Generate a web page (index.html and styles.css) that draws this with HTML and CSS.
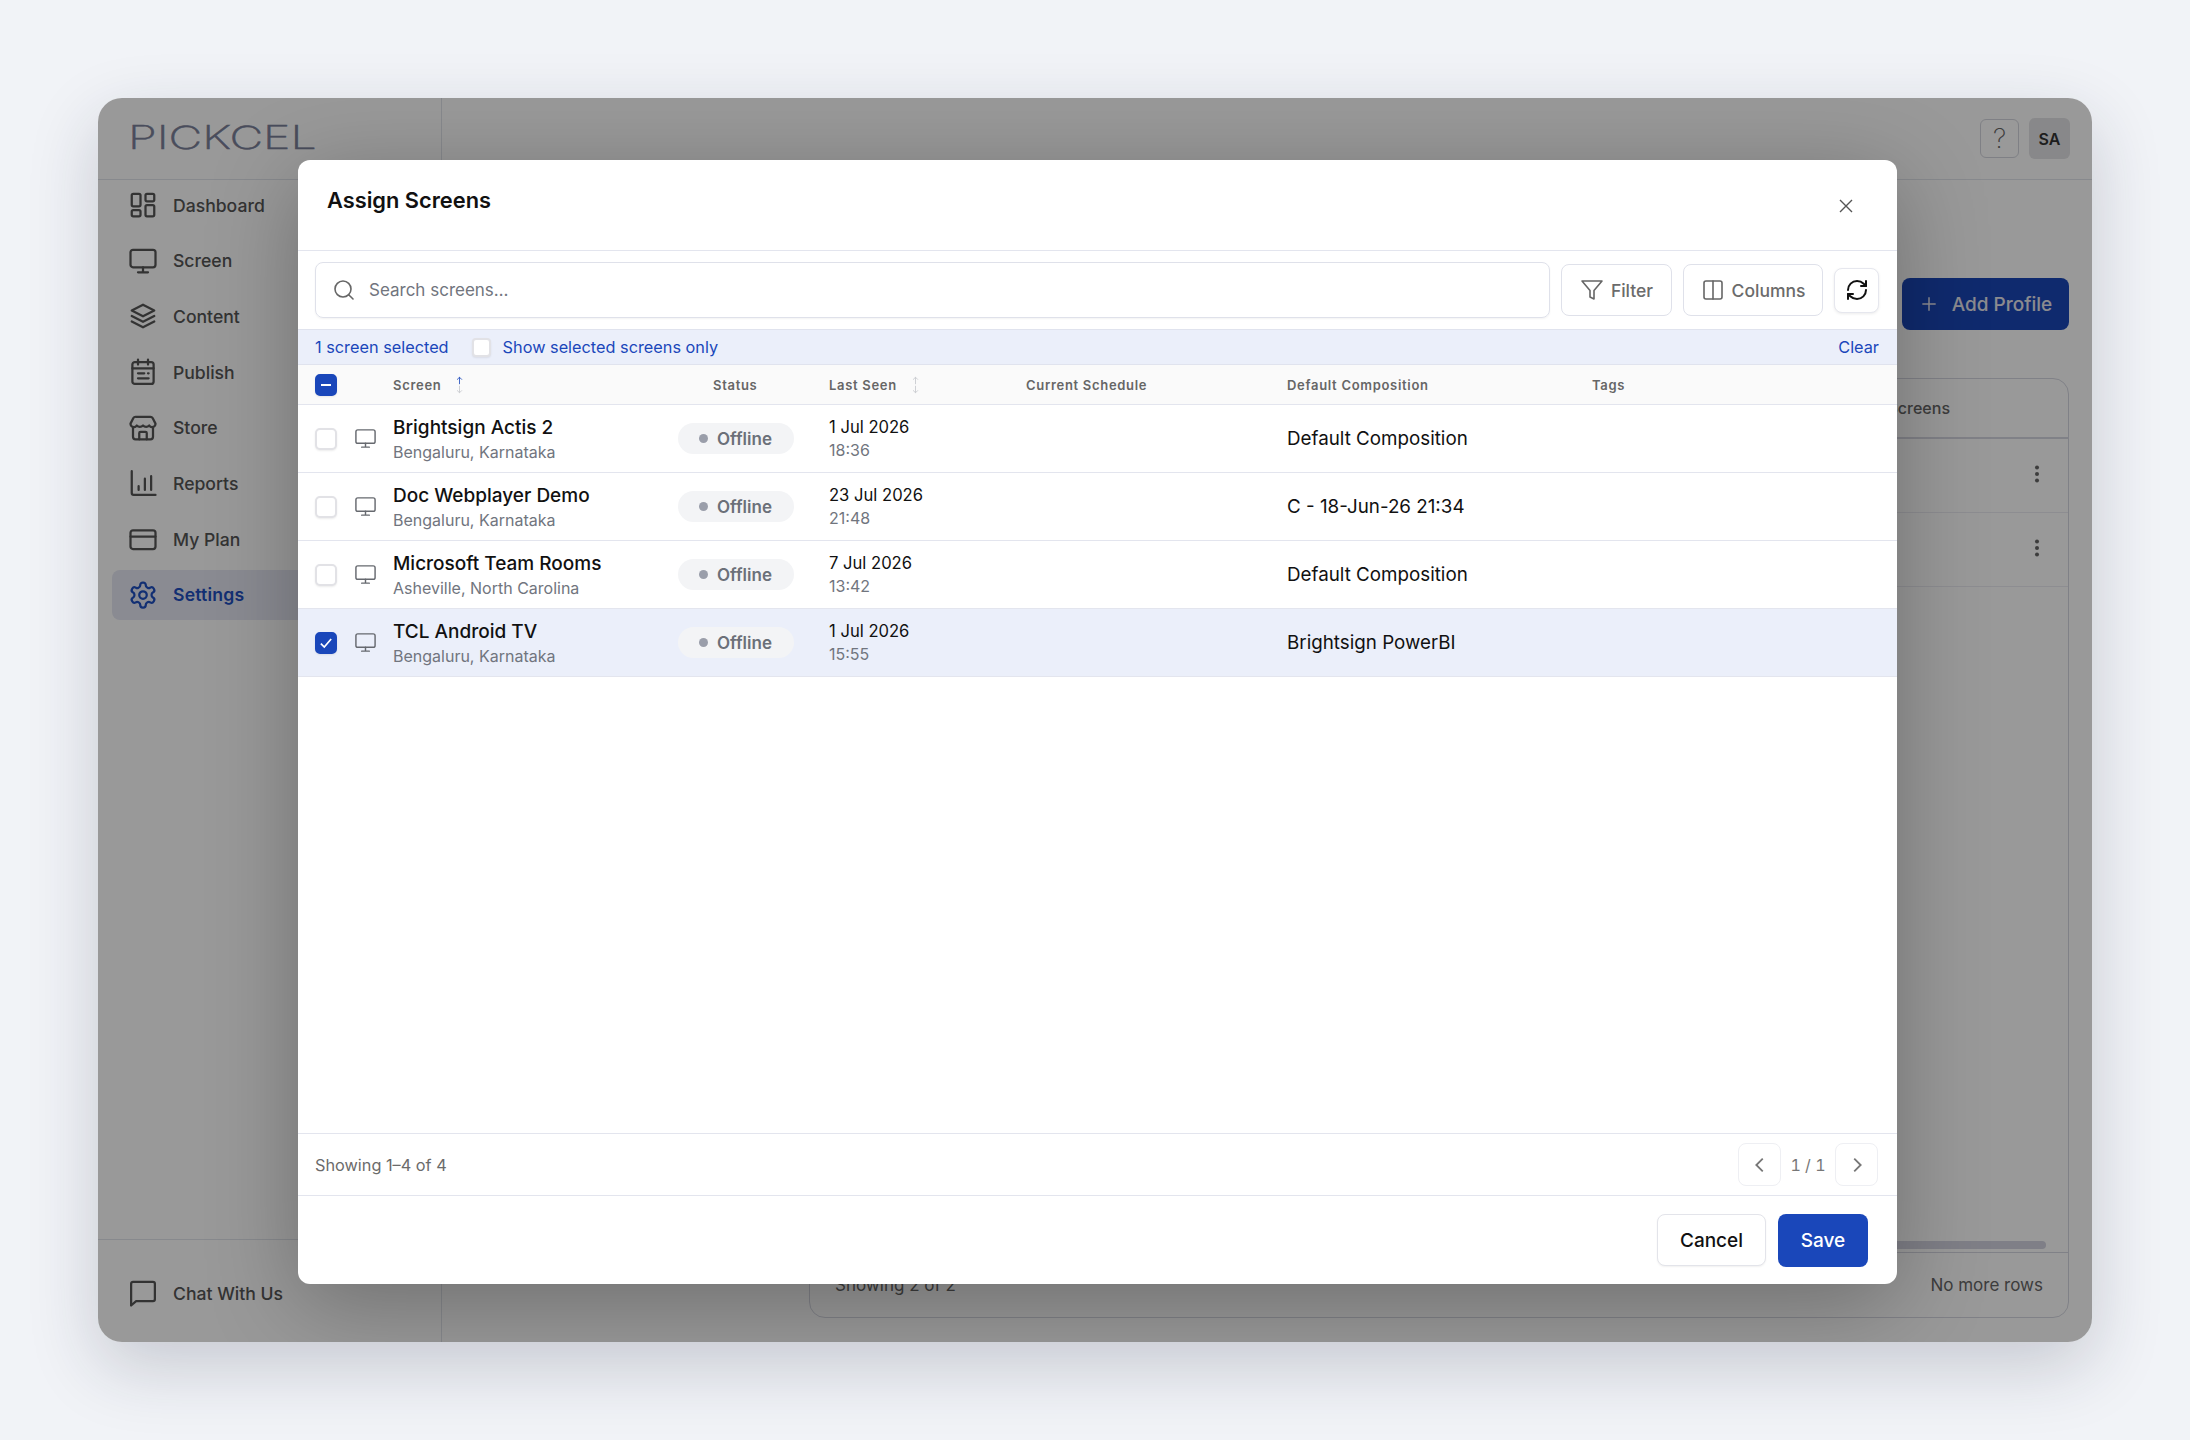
FILE: index.html
```html
<!DOCTYPE html>
<html>
	<head>
		<meta charset="UTF-8">
		<title>Assign Screens</title>
		<link rel="stylesheet" href="styles.css">
	</head>
	<body>
		<svg class="defs" width="0" height="0">
			<symbol id="i-monitor" viewBox="0 0 24 24"><rect x="2" y="3" width="20" height="14" rx="2"/><path d="M8 21h8M12 17v4"/></symbol>
			<symbol id="i-dash" viewBox="0 0 24 24"><rect x="3" y="3" width="7" height="10" rx="1.2"/><rect x="14" y="3" width="7" height="6" rx="1.2"/><rect x="14" y="12" width="7" height="9" rx="1.2"/><rect x="3" y="16" width="7" height="5" rx="1.2"/></symbol>
			<symbol id="i-layers" viewBox="0 0 24 24"><path d="M12 3l9 4.600-9 4.600-9-4.600z"/><path d="M3 12l9 4.600 9-4.600"/><path d="M3 16.400L12 21l9-4.600"/></symbol>
			<symbol id="i-publish" viewBox="0 0 24 24"><rect x="3.500" y="4" width="17" height="17.500" rx="2"/><path d="M8 2v4M16 2v4M3.500 9h17M8 13h5M16 13h.5M8 17h8.500"/></symbol>
			<symbol id="i-store" viewBox="0 0 24 24"><path d="M4 11v8a2 2 0 0 0 2 2h12a2 2 0 0 0 2-2v-8"/><path d="M6 3h12a2 2 0 0 1 1.700 1L22 8.500a2.700 2.700 0 0 1-5 1.500 3.400 3.400 0 0 1-5 0 3.400 3.400 0 0 1-5 0 2.700 2.700 0 0 1-5-1.500L4.300 4A2 2 0 0 1 6 3z"/><path d="M9 21v-5a1 1 0 0 1 1-1h4a1 1 0 0 1 1 1v5"/></symbol>
			<symbol id="i-reports" viewBox="0 0 24 24"><path d="M3 2.500V20a1.500 1.500 0 0 0 1.500 1.500H22"/><path d="M8.500 17.500v-3M13.500 17.500V8.500M18.500 17.500V6.500"/></symbol>
			<symbol id="i-card" viewBox="0 0 24 24"><rect x="2" y="5" width="20" height="15" rx="2"/><path d="M2 10h20"/></symbol>
			<symbol id="i-gear" viewBox="0 0 24 24"><path d="M12.220 2h-.44a2 2 0 0 0-2 2v.18a2 2 0 0 1-1 1.730l-.43.25a2 2 0 0 1-2 0l-.15-.08a2 2 0 0 0-2.730.73l-.22.38a2 2 0 0 0 .73 2.730l.15.1a2 2 0 0 1 1 1.720v.51a2 2 0 0 1-1 1.740l-.15.09a2 2 0 0 0-.73 2.730l.22.38a2 2 0 0 0 2.730.73l.15-.08a2 2 0 0 1 2 0l.43.25a2 2 0 0 1 1 1.730V20a2 2 0 0 0 2 2h.44a2 2 0 0 0 2-2v-.18a2 2 0 0 1 1-1.730l.43-.25a2 2 0 0 1 2 0l.15.08a2 2 0 0 0 2.730-.73l.22-.39a2 2 0 0 0-.73-2.730l-.15-.08a2 2 0 0 1-1-1.740v-.5a2 2 0 0 1 1-1.740l.15-.09a2 2 0 0 0 .73-2.730l-.22-.38a2 2 0 0 0-2.730-.73l-.15.08a2 2 0 0 1-2 0l-.43-.25a2 2 0 0 1-1-1.730V4a2 2 0 0 0-2-2z"/><circle cx="12" cy="12" r="3"/></symbol>
			<symbol id="i-chat" viewBox="0 0 24 24"><path d="M21.500 17a1.500 1.500 0 0 1-1.500 1.500H6.500L2.500 22V4.500A1.500 1.500 0 0 1 4 3h16a1.500 1.500 0 0 1 1.500 1.500z"/></symbol>
			<symbol id="i-sort" viewBox="0 0 10 22"><path class="up" d="M5 10V1.500M2 4.500l3-3 3 3"/><path class="down" d="M5 12v8.500M2 17.500l3 3 3-3"/></symbol>
		</svg>

		<div class="app">
			<aside class="side">
				<div class="brand"><span class="logo">PICKCEL</span></div>
				<nav class="nav">
					<a class="nav-item"><svg class="ico"><use href="#i-dash"/></svg>Dashboard</a>
					<a class="nav-item"><svg class="ico"><use href="#i-monitor"/></svg>Screen</a>
					<a class="nav-item"><svg class="ico"><use href="#i-layers"/></svg>Content</a>
					<a class="nav-item"><svg class="ico"><use href="#i-publish"/></svg>Publish</a>
					<a class="nav-item"><svg class="ico"><use href="#i-store"/></svg>Store</a>
					<a class="nav-item"><svg class="ico"><use href="#i-reports"/></svg>Reports</a>
					<a class="nav-item"><svg class="ico"><use href="#i-card"/></svg>My Plan</a>
					<a class="nav-item active"><svg class="ico"><use href="#i-gear"/></svg>Settings</a>
				</nav>
				<div class="side-foot">
					<a class="nav-item"><svg class="ico"><use href="#i-chat"/></svg>Chat With Us</a>
				</div>
			</aside>
			<main class="main">
				<header class="top">
					<span class="help">?</span>
					<span class="avatar">SA</span>
				</header>
				<div class="page">
					<button class="add-btn"><svg class="plus" viewBox="0 0 24 24"><path d="M12 4v16M4 12h16"/></svg>Add Profile</button>
					<section class="card">
						<div class="card-head">Screens</div>
						<div class="card-row"><span class="dots"></span></div>
						<div class="card-row"><span class="dots"></span></div>
						<div class="card-scroll"></div>
						<div class="card-foot"><span>Showing 2 of 2</span><span>No more rows</span></div>
					</section>
				</div>
			</main>

			<div class="overlay">
				<div class="modal">
					<div class="modal-head">
						<h3>Assign Screens</h3>
						<svg class="close" viewBox="0 0 14 14"><path d="M1 1l12 12M13 1L1 13"/></svg>
					</div>

					<div class="toolbar">
						<div class="search">
							<svg class="tool-ico" viewBox="0 0 24 24"><circle cx="11" cy="11" r="8"/><path d="M21 21l-4.300-4.300"/></svg>
							<span>Search screens…</span>
						</div>
						<button class="tool-btn filter"><svg class="tool-ico" viewBox="0 0 24 24"><path d="M22 3H2l8 9.460V19l4 2v-8.540L22 3z"/></svg>Filter</button>
						<button class="tool-btn columns"><svg class="tool-ico" viewBox="0 0 24 24"><rect x="3" y="3" width="18" height="18" rx="2"/><path d="M12 3v18"/></svg>Columns</button>
						<button class="refresh"><svg class="tool-ico" viewBox="0 0 24 24"><path d="M3 12a9 9 0 0 1 9-9 9.750 9.750 0 0 1 6.740 2.740L21 8"/><path d="M21 3v5h-5"/><path d="M21 12a9 9 0 0 1-9 9 9.750 9.750 0 0 1-6.740-2.740L3 16"/><path d="M8 16H3v5"/></svg></button>
					</div>

					<div class="selbar">
						<span>1 screen selected</span>
						<span class="box small"></span>
						<span>Show selected screens only</span>
						<a class="clear">Clear</a>
					</div>

					<div class="grid thead">
						<span class="box blue"><i class="dash"></i></span>
						<span></span>
						<span class="th-sort">Screen<svg class="sort on"><use href="#i-sort"/></svg></span>
						<span class="th-status">Status</span>
						<span class="th-sort">Last Seen<svg class="sort"><use href="#i-sort"/></svg></span>
						<span>Current Schedule</span>
						<span>Default Composition</span>
						<span>Tags</span>
					</div>

					<div class="tbody">
						<div class="grid row">
							<span class="box"></span>
							<svg class="mon"><use href="#i-monitor"/></svg>
							<div class="two"><b>Brightsign Actis 2</b><small>Bengaluru, Karnataka</small></div>
							<span class="pill"><i></i>Offline</span>
							<div class="two date"><em>1 Jul 2026</em><small>18:36</small></div>
							<span></span>
							<span class="comp">Default Composition</span>
							<span></span>
						</div>
						<div class="grid row">
							<span class="box"></span>
							<svg class="mon"><use href="#i-monitor"/></svg>
							<div class="two"><b>Doc Webplayer Demo</b><small>Bengaluru, Karnataka</small></div>
							<span class="pill"><i></i>Offline</span>
							<div class="two date"><em>23 Jul 2026</em><small>21:48</small></div>
							<span></span>
							<span class="comp">C - 18-Jun-26 21:34</span>
							<span></span>
						</div>
						<div class="grid row">
							<span class="box"></span>
							<svg class="mon"><use href="#i-monitor"/></svg>
							<div class="two"><b>Microsoft Team Rooms</b><small>Asheville, North Carolina</small></div>
							<span class="pill"><i></i>Offline</span>
							<div class="two date"><em>7 Jul 2026</em><small>13:42</small></div>
							<span></span>
							<span class="comp">Default Composition</span>
							<span></span>
						</div>
						<div class="grid row picked">
							<span class="box blue"><svg class="tick" viewBox="0 0 14 14"><path d="M2.500 7.500l3 3 6-7"/></svg></span>
							<svg class="mon"><use href="#i-monitor"/></svg>
							<div class="two"><b>TCL Android TV</b><small>Bengaluru, Karnataka</small></div>
							<span class="pill"><i></i>Offline</span>
							<div class="two date"><em>1 Jul 2026</em><small>15:55</small></div>
							<span></span>
							<span class="comp">Brightsign PowerBI</span>
							<span></span>
						</div>
					</div>

					<div class="pager">
						<span class="count">Showing 1–4 of 4</span>
						<button class="pg"><svg viewBox="0 0 24 24"><path d="M15 5l-7 7 7 7"/></svg></button>
						<span class="pg-num">1 / 1</span>
						<button class="pg"><svg viewBox="0 0 24 24"><path d="M9 5l7 7-7 7"/></svg></button>
					</div>

					<div class="actions">
						<button class="cancel">Cancel</button>
						<button class="save">Save</button>
					</div>
				</div>
			</div>
		</div>
	</body>
</html>
```

FILE: styles.css
```css
*{
	box-sizing: border-box;
}
html,body{
	height: 100%;
}
body{
	margin: 0;
	padding: 98px;
	background: #f1f3f7;
	font-family: Inter, "Noto Sans", sans-serif;
	color: #111;
}
button{
	font-family: inherit;
	cursor: pointer;
}
.defs{
	position: absolute;
}

/* app behind the dialog */
.app{
	position: relative;
	display: flex;
	height: 1244px;
	background: #fff;
	border-radius: 24px;
	overflow: hidden;
	box-shadow: 0 24px 70px rgba(30,35,60,.2);
}
.side{
	width: 344px;
	flex: none;
	display: flex;
	flex-direction: column;
	border-right: 1px solid #e2e4ec;
}
.brand{
	height: 82px;
	flex: none;
	padding: 20px 0 0 30px;
	border-bottom: 1px solid #e2e4ec;
}
.logo{
	display: inline-block;
	font-size: 32px;
	line-height: 40px;
	font-weight: 200;
	color: #7b8099;
	-webkit-text-stroke: .5px #7b8099;
	transform: scaleX(1.45);
	transform-origin: left center;
}
.nav{
	display: flex;
	flex-direction: column;
	gap: 5.700px;
}
.nav-item{
	display: flex;
	align-items: center;
	gap: 15.500px;
	height: 50px;
	margin-left: 14px;
	padding-left: 15.500px;
	border-radius: 8px;
	font-size: 17.600px;
	font-weight: 500;
	color: #555;
}
.nav-item.active{
	background: #e6e8f3;
	color: #1e4fc0;
	font-weight: 600;
	letter-spacing: .2px;
}
.ico{
	width: 30px;
	height: 30px;
	flex: none;
	fill: none;
	stroke: currentColor;
	stroke-width: 1.800;
	stroke-linecap: round;
	stroke-linejoin: round;
}
.side-foot{
	margin-top: auto;
	height: 103px;
	padding-top: 28px;
	border-top: 1px solid #e2e4ec;
}
.main{
	flex: 1;
	display: flex;
	flex-direction: column;
	min-width: 0;
}
.top{
	height: 82px;
	flex: none;
	display: flex;
	justify-content: flex-end;
	align-items: center;
	gap: 10px;
	padding-right: 22px;
	border-bottom: 1px solid #e2e4ec;
}
.help{
	width: 39px;
	height: 39px;
	display: flex;
	align-items: center;
	justify-content: center;
	border: 1px solid #d4d6de;
	border-radius: 6px;
	font-size: 27px;
	font-weight: 200;
	color: #666;
}
.avatar{
	width: 41px;
	height: 41px;
	display: flex;
	align-items: center;
	justify-content: center;
	background: #e3e3e6;
	border-radius: 6px;
	font-size: 16px;
	font-weight: 600;
	color: #333;
}
.page{
	flex: 1;
	display: flex;
	flex-direction: column;
	padding: 98px 23px 24px 367px;
}
.add-btn{
	align-self: flex-end;
	width: 167px;
	height: 52px;
	display: flex;
	align-items: center;
	justify-content: center;
	gap: 13px;
	background: #1a47b8;
	border: 0;
	border-radius: 8px;
	font-size: 19px;
	font-weight: 500;
	color: #e8e8ee;
}
.plus{
	width: 20px;
	height: 20px;
	fill: none;
	stroke: currentColor;
	stroke-width: 1.800;
}
.card{
	flex: 1;
	margin-top: 48px;
	display: flex;
	flex-direction: column;
	border: 1px solid #d6d8e2;
	border-radius: 16px;
}
.card-head{
	height: 60px;
	padding-right: 118px;
	display: flex;
	align-items: center;
	justify-content: flex-end;
	border-bottom: 2px solid #d6d8e2;
	font-size: 16px;
	font-weight: 500;
	color: #666;
}
.card-row{
	height: 74px;
	display: flex;
	align-items: center;
	justify-content: flex-end;
	padding: 0 29px 3px 0;
	border-bottom: 1px solid #ebecf2;
}
.dots{
	width: 4px;
	height: 4px;
	border-radius: 50%;
	background: #666;
	box-shadow: 0 -6.500px 0 #666, 0 6.500px 0 #666;
}
.card-scroll{
	margin-top: auto;
	margin-bottom: 3px;
	margin-right: 22px;
	height: 8px;
	width: 1000px;
	align-self: flex-end;
	border-radius: 4px;
	background: #d4d4e1;
}
.card-foot{
	height: 65px;
	display: flex;
	justify-content: space-between;
	align-items: center;
	padding: 0 25px;
	border-top: 1px solid #d6d8e2;
	font-size: 17px;
	color: #666;
}

/* dialog */
.overlay{
	position: absolute;
	inset: 0;
	padding: 62px 0 0 200px;
	background: rgba(0,0,0,.4);
}
.modal{
	width: 1599px;
	height: 1124px;
	display: flex;
	flex-direction: column;
	background: #fff;
	border-radius: 12px;
	overflow: hidden;
	box-shadow: 0 20px 90px rgba(0,0,0,.28);
}
.modal-head{
	height: 91px;
	flex: none;
	display: flex;
	justify-content: space-between;
	padding: 25px 44px 0 29px;
	border-bottom: 1px solid #e3e5ee;
}
.modal-head h3{
	margin: 0;
	font-size: 21.800px;
	line-height: 30px;
	font-weight: 600;
}
.close{
	width: 14px;
	height: 14px;
	margin-top: 14px;
	fill: none;
	stroke: #555;
	stroke-width: 1.400;
}
.toolbar{
	height: 78px;
	flex: none;
	display: flex;
	align-items: center;
	padding: 0 18px 0 17px;
}
.search{
	flex: 1;
	height: 56px;
	display: flex;
	align-items: center;
	gap: 13px;
	padding-left: 16px;
	border: 1px solid #dfe1ea;
	border-radius: 8px;
	box-shadow: 0 1px 2px rgba(0,0,0,.05);
	font-size: 17px;
	color: #71757e;
}
.tool-ico{
	width: 24px;
	height: 24px;
	flex: none;
	fill: none;
	stroke: #666;
	stroke-width: 1.600;
	stroke-linecap: round;
	stroke-linejoin: round;
}
.tool-btn{
	height: 52px;
	margin-left: 11px;
	display: flex;
	align-items: center;
	justify-content: center;
	gap: 7px;
	background: #fff;
	border: 1px solid #dfe1ea;
	border-radius: 8px;
	font-size: 17.500px;
	font-weight: 500;
	color: #6b6b6b;
}
.filter{
	width: 111px;
}
.columns{
	width: 140px;
}
.refresh{
	width: 45px;
	height: 45px;
	margin-left: 11px;
	display: flex;
	align-items: center;
	justify-content: center;
	padding: 0;
	background: #fff;
	border: 1px solid #e6e7ee;
	border-radius: 8px;
	box-shadow: 0 1px 3px rgba(0,0,0,.08);
}
.refresh .tool-ico{
	stroke: #111;
	stroke-width: 2;
}
.selbar{
	height: 36px;
	flex: none;
	display: flex;
	align-items: center;
	padding: 0 18px 0 17px;
	background: #ebeffa;
	border-top: 1px solid #e0e3ee;
	border-bottom: 1px solid #e0e3ee;
	font-size: 16.300px;
	color: #1a47ba;
}
.clear{
	margin-left: auto;
}
.box{
	width: 22px;
	height: 22px;
	flex: none;
	display: flex;
	align-items: center;
	justify-content: center;
	background: #fff;
	border: 2px solid #e2e2e6;
	border-radius: 5px;
	box-shadow: 0 1px 2px rgba(0,0,0,.08);
}
.box.small{
	width: 19px;
	height: 19px;
	margin: 0 12px 0 23px;
	border-radius: 4px;
}
.box.blue{
	background: #1a47ba;
	border-color: #1a47ba;
}
.dash{
	width: 10px;
	height: 2px;
	background: #fff;
}
.tick{
	width: 16px;
	height: 16px;
	fill: none;
	stroke: #fff;
	stroke-width: 1.500;
}
.grid{
	display: grid;
	grid-template-columns: 40px 38px 285px 151px 197px 261px 305px 1fr;
	align-items: center;
	padding-left: 17px;
}
.thead{
	height: 40px;
	flex: none;
	background: #fafafa;
	border-bottom: 1px solid #e3e5ee;
	font-size: 13px;
	font-weight: 600;
	letter-spacing: .7px;
	color: #666;
}
.th-sort{
	display: flex;
	align-items: center;
	gap: 14px;
}
.th-status{
	padding-left: 35px;
}
.sort{
	width: 9px;
	height: 18px;
	fill: none;
	stroke-width: 1;
}
.down{
	stroke: #c4c6cc;
}
.sort.on{
	--up: #1a47ba;
}
.up{
	stroke: var(--up, #c4c6cc);
}
.tbody{
	flex: 1;
}
.row{
	height: 68px;
	border-bottom: 1px solid #e3e5ee;
}
.row.picked{
	background: #ebeffa;
}
.mon{
	width: 23px;
	height: 23px;
	margin-left: -1.500px;
	fill: none;
	stroke: #66696f;
	stroke-width: 1.500;
	stroke-linecap: round;
}
.two{
	display: flex;
	flex-direction: column;
}
.two b{
	font-size: 19px;
	line-height: 26px;
	font-weight: 500;
}
.two small{
	font-size: 16px;
	line-height: 22px;
	color: #71757e;
}
.date em{
	font-style: normal;
	font-size: 16.600px;
	line-height: 23px;
}
.pill{
	width: 116px;
	height: 31px;
	display: flex;
	align-items: center;
	gap: 9px;
	padding-left: 21px;
	background: #f3f4f6;
	border-radius: 16px;
	font-size: 17px;
	font-weight: 600;
	color: #6b7079;
}
.pill i{
	width: 9px;
	height: 9px;
	border-radius: 50%;
	background: #9a9eaa;
}
.comp{
	font-size: 18.800px;
}
.pager{
	height: 63px;
	flex: none;
	display: flex;
	align-items: center;
	padding: 0 19px 0 17px;
	border-top: 1px solid #e3e5ee;
	border-bottom: 1px solid #e3e5ee;
}
.count{
	margin-right: auto;
	font-size: 16.300px;
	color: #6b6b6b;
}
.pg{
	width: 43px;
	height: 43px;
	display: flex;
	align-items: center;
	justify-content: center;
	padding: 0;
	background: #fff;
	border: 1px solid #eeeff3;
	border-radius: 8px;
}
.pg svg{
	width: 22px;
	height: 22px;
	fill: none;
	stroke: #777;
	stroke-width: 2;
}
.pg-num{
	width: 54px;
	text-align: center;
	font-size: 16px;
	font-variant-numeric: tabular-nums;
	color: #777;
}
.actions{
	height: 88px;
	flex: none;
	display: flex;
	justify-content: flex-end;
	align-items: center;
	gap: 12px;
	padding-right: 29px;
}
.cancel{
	width: 109px;
	height: 52px;
	background: #fff;
	border: 1px solid #e3e4ea;
	border-radius: 8px;
	box-shadow: 0 1px 2px rgba(0,0,0,.06);
	font-size: 19px;
	font-weight: 500;
	color: #111;
}
.save{
	width: 90px;
	height: 53px;
	background: #1a47ba;
	border: 0;
	border-radius: 8px;
	font-size: 19px;
	font-weight: 500;
	color: #fff;
}
```
